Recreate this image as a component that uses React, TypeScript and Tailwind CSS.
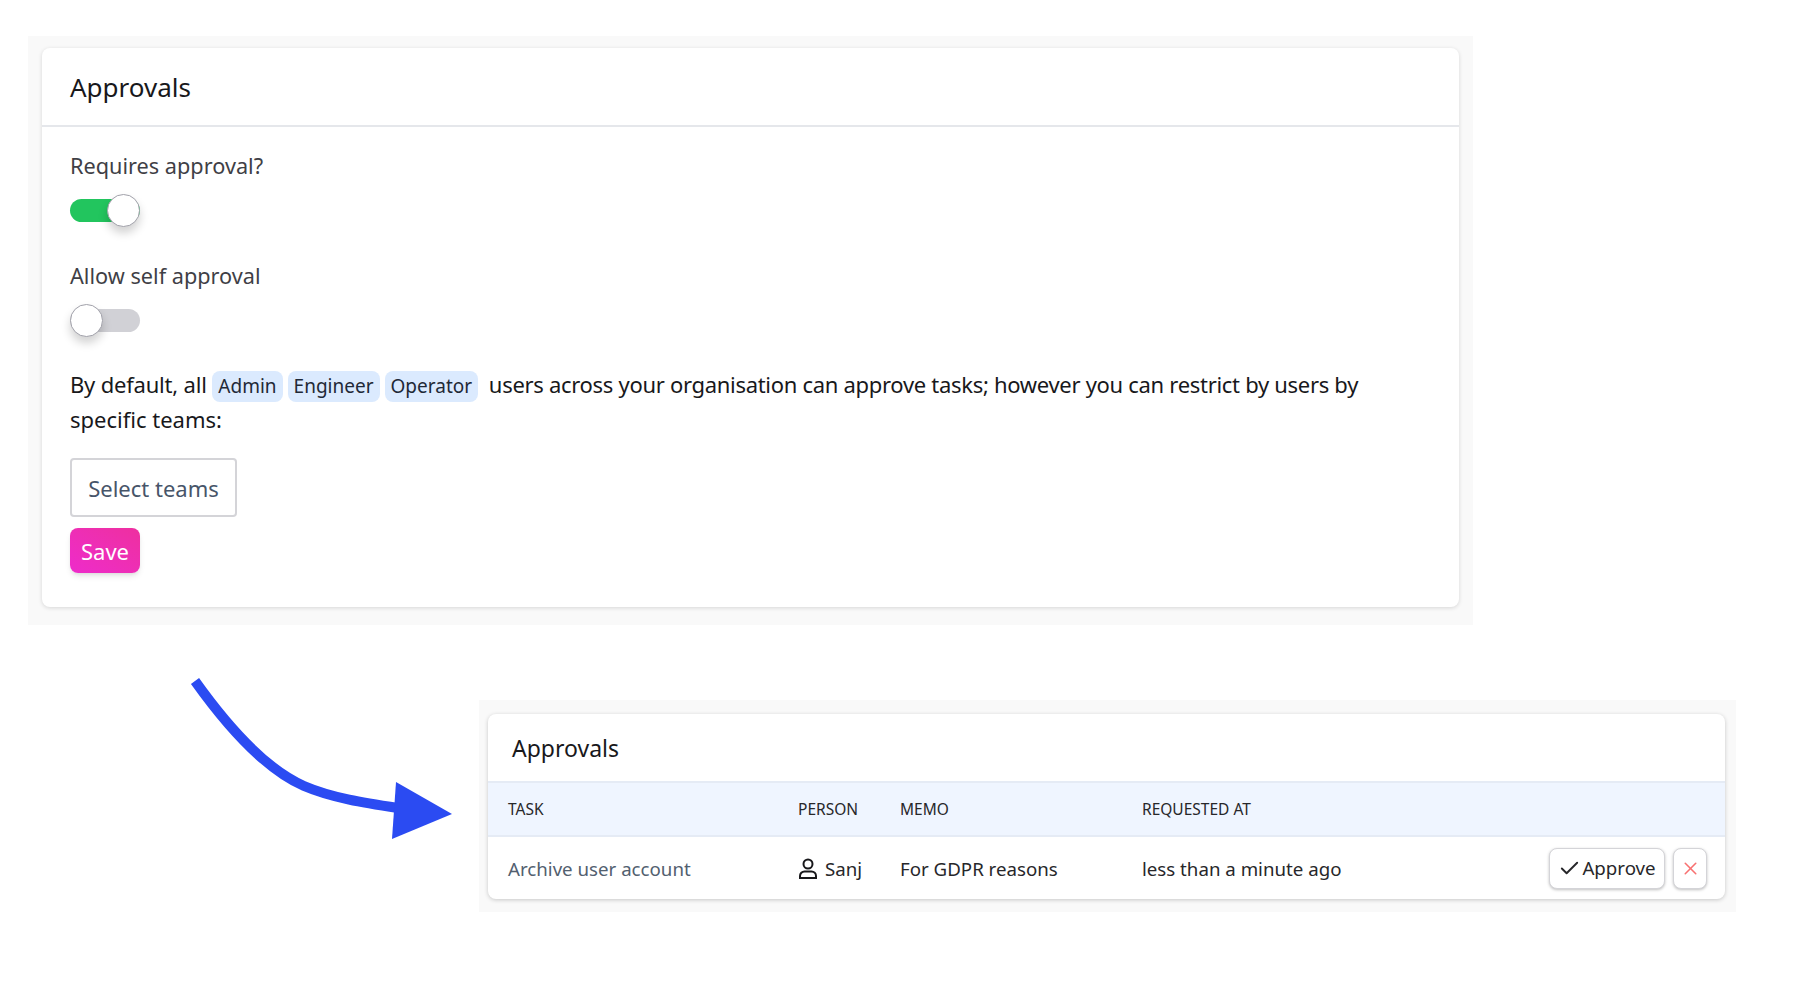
import React from 'react';
import { Check, X } from 'lucide-react';

function Toggle({ on }: { on: boolean }) {
  return (
    <div className="relative h-[33px] w-[70px]">
      <div className={`absolute left-0 right-0 top-[5px] h-[23px] rounded-full ${on ? 'bg-[#22c55e]' : 'bg-[#d1d1d6]'}`} />
      <div
        className={`absolute top-0 h-[33px] w-[33px] rounded-full border border-[#a1a1aa] bg-white shadow-[0_6px_10px_rgba(0,0,0,0.18)] ${on ? 'right-0' : 'left-0'}`}
      />
    </div>
  );
}

function Pill({ children }: { children: React.ReactNode }) {
  return (
    <span className="mr-[5px] inline-block h-[31px] rounded-lg bg-[#dbeafe] px-[6px] align-baseline text-[19px] leading-[31px] text-[#1f2937]">
      {children}
    </span>
  );
}

export default function App() {
  return (
    <div className="h-[1000px] w-[1800px] bg-white pt-[36px] font-['Noto_Sans',sans-serif]">
      {/* settings panel */}
      <div className="ml-[28px] w-[1445px] bg-[#f9f9f9] px-[14px] pb-[18px] pt-[12px]">
        <div className="rounded-lg bg-white shadow-[0_1px_4px_rgba(0,0,0,0.14)]">
          <div className="flex h-[79px] items-center border-b-2 border-[#e5e7eb] pl-[28px] pt-[1px] text-[26px] text-[#18181b]">Approvals</div>
          <div className="px-[28px] pb-[34px] pt-[22px] text-[22px] leading-[34px]">
            <div className="text-[21.7px] text-[#3f3f46]">Requires approval?</div>
            <div className="mt-[11px]">
              <Toggle on />
            </div>
            <div className="mt-[32px] text-[21.7px] text-[#3f3f46]">Allow self approval</div>
            <div className="mt-[11px]">
              <Toggle on={false} />
            </div>
            <p className="mt-[30px] text-[#18181b]">
              <span className="tracking-[-0.2px]">By default, all</span> <Pill>Admin</Pill>
              <Pill>Engineer</Pill>
              <Pill>Operator</Pill> <span className="tracking-[-0.3px]">users across your organisation can approve tasks; however you can restrict by users by</span> specific teams:
            </p>
            <div className="mt-[22px] flex h-[59px] w-[167px] items-center justify-center rounded border-2 border-[#d4d4d8] text-[#475569]">Select teams</div>
            <button className="mt-[11px] block h-[45px] w-[70px] rounded-lg bg-gradient-to-tr from-[#ee2bcb] to-[#ee2f9f] text-white shadow-md">Save</button>
          </div>
        </div>
      </div>

      <div className="mt-[45px] flex items-start">
        {/* arrow */}
        <svg className="ml-[180px] mt-0 shrink-0" width="299" height="190" viewBox="180 670 299 190" fill="none">
          <path d="M195 681 C235 737 272 772 304 786 C332 798 365 803 398 808" stroke="#2b4bf2" strokeWidth="10" />
          <path d="M396 782 L452 814 L392 839 Z" fill="#2b4bf2" />
        </svg>

        {/* approvals table panel */}
        <div className="mt-[30px] w-[1257px] bg-[#f9f9f9] pb-[13px] pl-[9px] pr-[11px] pt-[14px]">
          <div className="overflow-hidden rounded-lg bg-white shadow-[0_1px_4px_rgba(0,0,0,0.2)]">
            <div className="flex h-[67px] items-center pl-[24px] pt-[1px] text-[23px] text-[#18181b]">Approvals</div>
            <table className="w-full table-fixed border-collapse text-left">
              <colgroup>
                <col className="w-[291px]" />
                <col className="w-[102px]" />
                <col className="w-[242px]" />
                <col />
                <col className="w-[230px]" />
              </colgroup>
              <thead>
                <tr className="h-[54px] border-y-2 border-[#e5ebf5] bg-[#eff5ff] text-[15.5px] font-normal text-[#27272a]">
                  <th className="pl-[20px] pt-[1px] font-normal">TASK</th>
                  <th className="pl-[19px] pt-[1px] font-normal">PERSON</th>
                  <th className="pl-[19px] pt-[1px] font-normal">MEMO</th>
                  <th className="pl-[19px] pt-[1px] font-normal">REQUESTED AT</th>
                  <th />
                </tr>
              </thead>
              <tbody>
                <tr className="h-[63px] text-[18.7px] text-[#27272a]">
                  <td className="pl-[20px] pt-[2px] text-[#52606f]">Archive user account</td>
                  <td className="pl-[19px] pt-[2px]">
                    <span className="flex items-center gap-[7px]">
                      <svg width="20" height="22" viewBox="0 0 20 22" fill="none" stroke="#18181b" strokeWidth="2">
                        <circle cx="10" cy="6" r="4.5" />
                        <path d="M2 20v-2a4.5 4.5 0 0 1 4.5-4.5h7A4.5 4.5 0 0 1 18 18v2z" />
                      </svg>
                      Sanj
                    </span>
                  </td>
                  <td className="pl-[19px] pt-[2px]">For GDPR reasons</td>
                  <td className="pl-[19px] pt-[2px] whitespace-nowrap">less than a minute ago</td>
                  <td className="pr-[18px]">
                    <div className="flex justify-end gap-[8px]">
                      <button className="flex h-[41px] w-[116px] items-center justify-center gap-[1px] rounded-lg border border-[#d4d4d8] bg-white shadow-[0_1px_3px_rgba(0,0,0,0.25)]">
                        <Check size={23} strokeWidth={2} />
                        Approve
                      </button>
                      <button className="flex h-[41px] w-[34px] items-center justify-center rounded-lg border border-[#d4d4d8] bg-white shadow-[0_1px_3px_rgba(0,0,0,0.25)]">
                        <X size={21} strokeWidth={1.8} className="text-[#f87171]" />
                      </button>
                    </div>
                  </td>
                </tr>
              </tbody>
            </table>
          </div>
        </div>
      </div>
    </div>
  );
}
